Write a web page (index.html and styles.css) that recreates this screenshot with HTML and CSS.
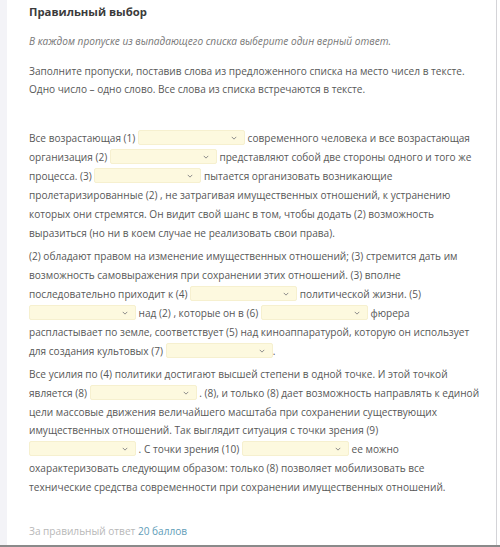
FILE: index.html
```html
<!DOCTYPE html>
<html lang="ru">
<head>
<meta charset="utf-8">
<link rel="stylesheet" href="styles.css">
</head>
<body>
<div class="frame">
  <div class="strip"></div>
  <div class="card">
    <h1 class="title">Правильный выбор</h1>
    <p class="hint">В каждом пропуске из выпадающего списка выберите один верный ответ.</p>
    <p class="task">Заполните пропуски, поставив слова из предложенного списка на место чисел в тексте.<br>Одно число – одно слово. Все слова из списка встречаются в тексте.</p>
    <div class="text">
      <p>Все возрастающая (1) <span class="sel"><svg viewBox="0 0 8 5"><path d="M1 1l3 3 3-3"/></svg></span> современного человека и все возрастающая<br>организация (2) <span class="sel"><svg viewBox="0 0 8 5"><path d="M1 1l3 3 3-3"/></svg></span> представляют собой две стороны одного и того же<br>процесса. (3) <span class="sel"><svg viewBox="0 0 8 5"><path d="M1 1l3 3 3-3"/></svg></span> пытается организовать возникающие<br>пролетаризированные (2) , не затрагивая имущественных отношений, к устранению<br>которых они стремятся. Он видит свой шанс в том, чтобы додать (2) возможность<br>выразиться (но ни в коем случае не реализовать свои права).</p>
      <p>(2) обладают правом на изменение имущественных отношений; (3) стремится дать им<br>возможность самовыражения при сохранении этих отношений. (3) вполне<br>последовательно приходит к (4) <span class="sel"><svg viewBox="0 0 8 5"><path d="M1 1l3 3 3-3"/></svg></span> политической жизни. (5)<br><span class="sel"><svg viewBox="0 0 8 5"><path d="M1 1l3 3 3-3"/></svg></span> над (2) , которые он в (6) <span class="sel"><svg viewBox="0 0 8 5"><path d="M1 1l3 3 3-3"/></svg></span> фюрера<br>распластывает по земле, соответствует (5) над киноаппаратурой, которую он использует<br>для создания культовых (7) <span class="sel"><svg viewBox="0 0 8 5"><path d="M1 1l3 3 3-3"/></svg></span>.</p>
      <p>Все усилия по (4) политики достигают высшей степени в одной точке. И этой точкой<br>является (8) <span class="sel"><svg viewBox="0 0 8 5"><path d="M1 1l3 3 3-3"/></svg></span> . (8), и только (8) дает возможность направлять к единой<br>цели массовые движения величайшего масштаба при сохранении существующих<br>имущественных отношений. Так выглядит ситуация с точки зрения (9)<br><span class="sel"><svg viewBox="0 0 8 5"><path d="M1 1l3 3 3-3"/></svg></span> . С точки зрения (10) <span class="sel"><svg viewBox="0 0 8 5"><path d="M1 1l3 3 3-3"/></svg></span> ее можно<br>охарактеризовать следующим образом: только (8) позволяет мобилизовать все<br>технические средства современности при сохранении имущественных отношений.</p>
    </div>
    <p class="score">За правильный ответ <span class="pts">20 баллов</span></p>
  </div>
</div>
</body>
</html>
```

FILE: styles.css
```css
html, body {
  margin: 0;
  padding: 0;
  background: #ffffff;
}
.frame {
  width: 500px;
  height: 547px;
  display: flex;
  box-sizing: border-box;
  border-bottom: 2px solid #8a8a8a;
  overflow: hidden;
}
.strip {
  width: 7px;
  background: #f3f3f7;
  flex: none;
}
.card {
  flex: 1;
  box-sizing: border-box;
  padding: 3px 4px 0 22px;
  border-right: 1px solid #d4d4d8;
  margin-right: 3px;
  font-family: "Open Sans", "Noto Sans", sans-serif;
  color: #585858;
  font-size: 10.1px;
  white-space: nowrap;
}
.title {
  margin: 0;
  font-size: 11.3px;
  font-weight: 700;
  color: #3b3b3b;
  line-height: 18px;
}
.hint {
  margin: 11px 0 0;
  font-style: italic;
  color: #777777;
  line-height: 18px;
}
.task {
  margin: 12px 0 0;
  line-height: 18px;
}
.text {
  margin-top: 31px;
}
.text p {
  margin: 0 0 4px;
  line-height: 19px;
}
.text p:last-child {
  line-height: 18.8px;
}
.sel {
  display: inline-flex;
  align-items: center;
  justify-content: flex-end;
  width: 107px;
  height: 15px;
  box-sizing: border-box;
  padding-right: 7px;
  background: #fdf9df;
  border: 1px solid #f6f0cf;
  border-radius: 2px;
  vertical-align: middle;
  margin-top: -3px;
}
.sel svg {
  width: 6px;
  height: 4px;
  fill: none;
  stroke: #8a8a8a;
  stroke-width: 1.3;
}
.score {
  margin: 25px 0 0;
  color: #b8b8b8;
  line-height: 18px;
}
.pts {
  color: #5f9db8;
}
```
